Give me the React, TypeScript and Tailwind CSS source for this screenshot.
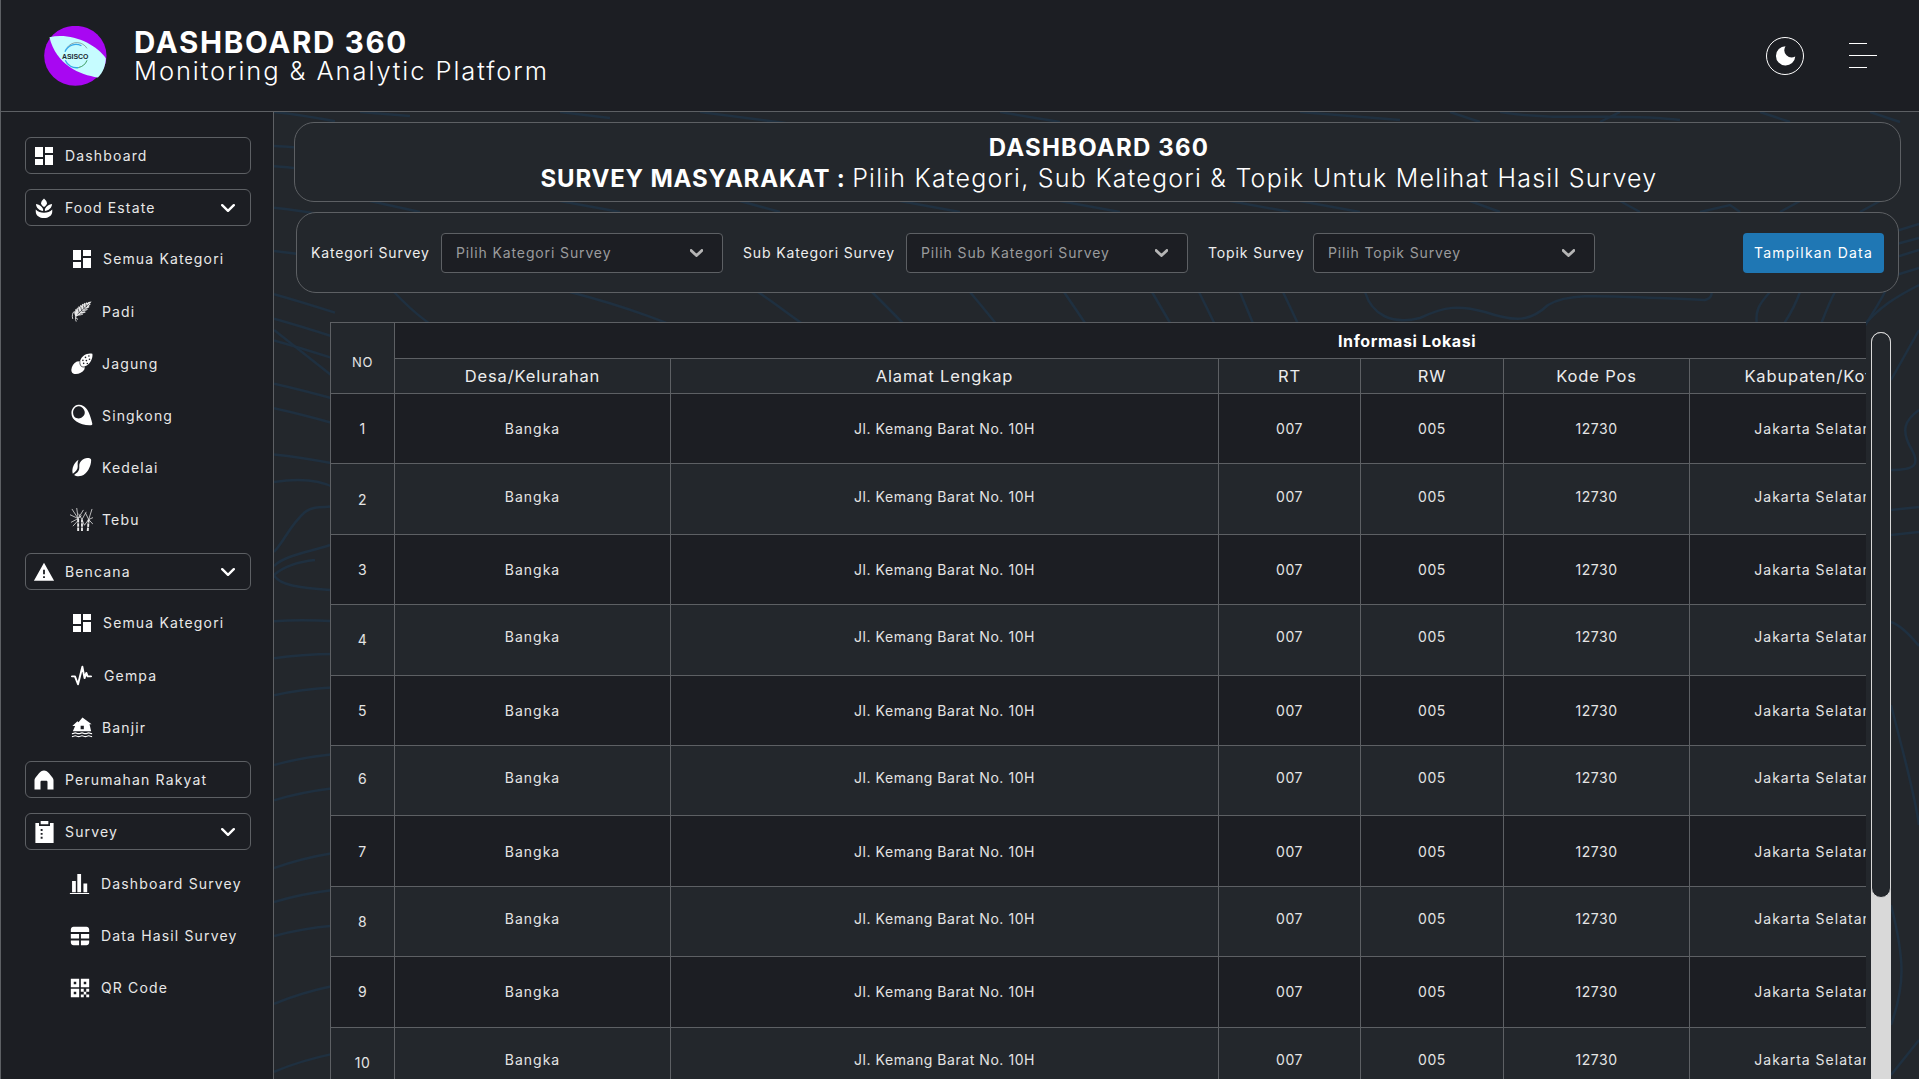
import React from "react";

type IP = { className?: string };
const Svg = ({ className, children, vb = "0 0 24 24" }: IP & { children: React.ReactNode; vb?: string }) => (
  <svg viewBox={vb} className={className} fill="currentColor">{children}</svg>
);

const DashIcon = ({ className }: IP) => (
  <Svg className={className}><path d="M3 13h8V3H3v10zm0 8h8v-6H3v6zm10 0h8V11h-8v10zm0-18v6h8V3h-8z" /></Svg>
);
const PlantIcon = ({ className }: IP) => (
  <Svg className={className}>
    <path d="M12 1.500c1.800 1.700 3.200 3.200 3.200 5.200 0 1.600-1.400 3-3.200 4.300-1.800-1.300-3.200-2.700-3.200-4.300 0-2 1.400-3.500 3.200-5.200z" />
    <path d="M3.200 7.500c3 .3 6.300 2.300 7.800 5.600v2.100C7 14.500 3.600 12 3.200 7.500zM20.800 7.500c-3 .3-6.300 2.300-7.800 5.600v2.100c4-.7 7.400-3.200 7.800-7.700z" />
    <path d="M3 13.600c2.300 2.500 5.500 3.500 9 3.600 3.500-.1 6.700-1.100 9-3.600v2.200c0 4.500-4.200 7.200-9 7.200s-9-2.700-9-7.200z" />
  </Svg>
);
const PadiIcon = ({ className }: IP) => (
  <svg viewBox="0 0 24 24" className={className}>
    <path fill="currentColor" d="M23.500 .5l-2 2.800 1.200.2-2.600 2.600 1.300.4-3.200 2.600 1.200.6-3.500 2.300 1 .8-3.700 1.800.7 1-4.200 1-.3-.4L5 18l-1-3.200-.5-3 1.300.5L5 9l1.200.8L7 7.400l1.100.9.700-2.500 1.200 1 .8-2.400 1.200 1 .9-2.300 1.300 1 1-2 1.300.9 1-1.500 1.300.7 1.200-1.100z" />
    <g stroke="#1c1e23" strokeWidth=".7" fill="none">
      <path d="M21 3L7 15.500M8 8.500l1.500 5M11 6.500l1.300 5M14 5l1 4M17 3.500l.8 3.500M10 15l6-.5M12.500 12l5.500-.8M15.500 9.500l4.500-1" />
    </g>
    <path fill="none" stroke="currentColor" strokeWidth="1" d="M7 15.500C5 17.500 4.500 20.500 6 23.500M3.500 12C1.500 14 1 17 2 20.500M5 18c.5 1.500 1.500 2.500 3 3" />
  </svg>
);
const CornIcon = ({ className }: IP) => (
  <svg viewBox="0 0 24 24" className={className}>
    <path fill="currentColor" d="M23.300.8c.6 3-.6 7-2.800 9.700-1.600 1.900-3.300 3.200-5.300 4l-.6 3.500c-2.500 3.600-6.400 5.300-10.800 4.800C1.500 22.300.2 20.700.4 18.300c.3-3.800 2.400-7.300 6-9.100l3.400-.3c.8-2.800 2.400-5 4.600-6.500 2.600-1.700 6-2.500 8.900-1.600z" />
    <g fill="#1c1e23">
      <circle cx="19.500" cy="3.300" r=".9" /><circle cx="15.800" cy="4.800" r=".9" /><circle cx="20.200" cy="6.800" r=".9" />
      <circle cx="16.800" cy="8.300" r=".9" /><circle cx="13" cy="8" r=".9" /><circle cx="13.800" cy="11.300" r=".9" /><circle cx="17.800" cy="11.500" r=".9" />
    </g>
    <path stroke="#1c1e23" strokeWidth=".8" fill="none" d="M9.800 9c-.4 2 0 4 1.400 5.500 1.200.8 2.600 1 4 .5" />
  </svg>
);
const CassavaIcon = ({ className }: IP) => (
  <svg viewBox="0 0 24 24" className={className}>
    <path fill="currentColor" d="M8 .8c3.200-.4 6 1 8.400 3.800 2.500 2.900 4.700 7.500 6.800 16.700.2 1.100-.3 1.800-1.300 1.900-5.800.4-12-1.300-16-4C2.400 16.900.6 13.800.5 10.100.4 5 3.700 1.300 8 .8z" />
    <path fill="#1c1e23" d="M8.100 2.500C4.500 2.900 2.100 6 2.300 9.800c.1 2.800 1.400 4.800 3.600 5.600 2.900 1 6.100-.1 7.900-2.500 1.500-2 1.700-4.500.3-6.700-1.500-2.500-3.600-4-6-3.700z" />
  </svg>
);
const BeanIcon = ({ className }: IP) => (
  <svg viewBox="0 0 24 24" className={className}>
    <path fill="currentColor" d="M23 3.500C23 11 18 20.500 11.500 22.500c-3.500 1-7 .5-9-1 3-2 5.200-3.600 6-6.400.8-3-.5-5.300 1-8.100C11 4 14.500 1.500 18 1.200c2-.2 5 .2 5 2.300zM1 20C0 17.500.3 13.800 1.800 10.500 3 7.800 5 5 7.800 3.300 6.500 6 6.700 8.500 6.900 10.700c.3 3.400-2.200 6.900-5.900 9.300z" />
  </svg>
);
const TebuIcon = ({ className }: IP) => (
  <svg viewBox="0 0 24 24" className={className} fill="none" stroke="currentColor">
    <path strokeWidth="2" strokeDasharray="3.600 .8" d="M8.500 24L8.500 11M12.500 24L12.500 12M18.500 24L19.500 12" />
    <path strokeWidth=".8" d="M8.500 11L2 1M8.500 11L7 0M8.500 11L0 7M8.500 11L14 2M8.500 11L1 15M8.500 11L12 8M8.500 13L3 19M12.500 12L9 6M12.500 12L17 4M19.500 12L23 1M19.500 12L16 5M19.500 12L24 10M19.500 12L15 18M19.500 12L24 17M12.500 12L15 18" />
  </svg>
);
const WarnIcon = ({ className }: IP) => (
  <Svg className={className}><path d="M1 21.500h22L12 2 1 21.500zm12-3h-2v-2h2v2zm0-4h-2v-5h2v5z" /></Svg>
);
const PulseIcon = ({ className }: IP) => (
  <svg viewBox="0 0 24 24" className={className} fill="none" stroke="currentColor" strokeWidth="2.200" strokeLinejoin="round" strokeLinecap="round">
    <path d="M1 13h3.500l3.500 9L13 2l2.500 13 2-6 1.500 4H23" />
  </svg>
);
const FloodIcon = ({ className }: IP) => (
  <Svg className={className}>
    <path d="M12.500 1.500l10 7.500h-2.300l1.800 7.500H2l2.500-5.500H1.500L7 5.800l1.200 1 4.300-5.300zM10.500 10.500v4h3.500v-4z" fill="currentColor" fillRule="evenodd" />
    <path d="M1 18.600c1.800 0 2-.9 3.700-.9s1.900.9 3.700.9 1.900-.9 3.600-.9 1.900.9 3.700.9 1.900-.9 3.600-.9 1.900.9 3.700.9v1.300c-1.800 0-2-.9-3.700-.9s-1.900.9-3.600.9-2-.9-3.700-.9-1.900.9-3.600.9-2-.9-3.700-.9-1.900.9-3.700.9zM1 21.800c1.800 0 2-.9 3.700-.9s1.900.9 3.700.9 1.900-.9 3.600-.9 1.900.9 3.700.9 1.900-.9 3.600-.9 1.900.9 3.700.9v1.300c-1.800 0-2-.9-3.700-.9s-1.900.9-3.600.9-2-.9-3.700-.9-1.900.9-3.600.9-2-.9-3.700-.9-1.900.9-3.700.9z" />
  </Svg>
);
const HomeIcon = ({ className }: IP) => (
  <Svg className={className}>
    <path fillRule="evenodd" d="M12 2.500c2 0 3.700 1.200 5 2.700l3.600 4.500c.6.800.9 1.600.9 2.500v9.300h-6v-7.500c0-.8-.6-1.300-1.300-1.300h-4.400c-.7 0-1.300.5-1.300 1.300v7.500h-6v-9.300c0-.9.300-1.700.9-2.500L7 5.200c1.300-1.500 3-2.700 5-2.700z" />
  </Svg>
);
const ClipIcon = ({ className }: IP) => (
  <Svg className={className}>
    <path fillRule="evenodd" d="M8 1h8v3.500H8zM2.500 3h3.800v3.200h11.400V3h3.800v21h-19zM8 9.500h2v2H8zm0 4h2v2H8zm0 4h2v2H8z" />
  </Svg>
);
const BarsIcon = ({ className }: IP) => (
  <Svg className={className}>
    <path d="M1 22.800h22V24H1zM3.500 9h4.300v13H3.500zM9.500 1h4.300v21H9.500zM16.500 12h4.300v10h-4.300z" />
  </Svg>
);
const TableIcon = ({ className }: IP) => (
  <Svg className={className}>
    <path d="M2 5c0-1.700 1.300-3 3-3h14c1.700 0 3 1.300 3 3v2.500H2zM2 9.700h9v5H2zM13 9.700h9v5h-9zM2 17h9v5H5c-1.700 0-3-1.300-3-3zM13 17h9v2c0 1.700-1.300 3-3 3h-6z" />
  </Svg>
);
const QrIcon = ({ className }: IP) => (
  <Svg className={className}>
    <path fillRule="evenodd" d="M1 1h10v10H1zm3.500 3.500v3h3v-3zM13 1h10v10H13zm3.500 3.500v3h3v-3zM1 13h10v10H1zm3.500 3.500v3h3v-3zM13 13h3.500v3.500H13zM19.500 13H23v3.500h-3.500zM16.500 16.500h3v3.200h-3zM13 19.700h3.500V23H13zM19.500 19.700H23V23h-3.500z" />
  </Svg>
);
const Chevron = ({ className, w = 2.4 }: IP & { w?: number }) => (
  <svg viewBox="0 0 14 8" className={className} fill="none" stroke="currentColor" strokeWidth={w} strokeLinecap="round" strokeLinejoin="round">
    <path d="M1.200 1.200L7 6.800l5.800-5.600" />
  </svg>
);

const Logo = () => (
  <svg viewBox="42 32 190 182" className="w-[63px] h-[60px] mt-[1px]">
    <ellipse cx="136.500" cy="122.500" rx="94.500" ry="91" fill="#a807f2" />
    <path d="M58 66C120 50 200 85 229 130 229 150 220 175 205 188 150 180 78 150 58 66Z" fill="#c6fcff" />
    <path d="M172 100a36 36 0 0 0-60-3" fill="none" stroke="#555" strokeWidth="1.500" />
    <path d="M155 92a36 36 0 0 0-50 18" fill="none" stroke="#38a8e8" strokeWidth="4" />
    <path d="M106 136a36 36 0 0 0 40 22" fill="none" stroke="#38a8e8" strokeWidth="4" />
    <path d="M146 158a36 36 0 0 0 26-22" fill="none" stroke="#3c9a5f" strokeWidth="3" />
    <text x="136" y="131" textAnchor="middle" fontSize="21" fontWeight="700" fill="#1d2a33" className="font-['Liberation_Sans',sans-serif]">ASISCO</text>
  </svg>
);

const leftLines: [number, number][] = [[0, 15], [55, 65], [88, 100], [155, 170], [225, 240], [295, 325], [335, 365], [370, 400], [440, 465], [480, 505], [555, 570], [825, 825], [885, 878], [945, 932], [1058, 1040], [1115, 1095], [1225, 1200], [1280, 1260], [1335, 1318], [1445, 1415], [1555, 1525]];

const Topo = () => (
  <svg viewBox="274 112 1645 967" className="absolute inset-0 w-[1645px] h-[967px]" fill="none" stroke="#1f3040" strokeWidth="2.500">
    {leftLines.map(([a, b], i) => (
      <path key={i} d={`M274 ${112 + a / 1.62}Q300 ${112 + (a + b) / 3.24 - 2} 335 ${112 + b / 1.62}`} />
    ))}
    <path d="M274 482C300 478 320 480 335 488M274 552C285 540 290 525 305 512 315 505 325 508 335 506M274 566C285 555 310 552 330 545M274 575C282 568 295 562 315 560M274 575C278 585 300 588 330 590" />
    <path d="M360 112L410 116M560 112L610 118M700 112L800 125M1000 112L1060 122M1300 112L1400 120M1620 112L1600 122M1760 112L1790 122M1870 112L1900 122M1500 112C1560 122 1620 112 1680 120M1450 112L1480 122" />
    <path d="M370 201L420 212M560 201L620 212M740 201L780 212M900 201L960 212M1060 201L1120 212M1230 201L1290 212M1300 201L1360 212M1470 201L1500 212M1620 201L1640 212M1800 201L1780 212M1700 212L1730 205 1740 212M1880 201L1860 212" />
    <path d="M274 330L350 390" />
    <path d="M394 292C430 330 470 360 519 322" />
    <path d="M570 292C620 305 680 325 711 345" />
    <path d="M758 292C785 310 815 335 835 345M872 292C890 310 910 330 924 345M970 292C985 310 1002 330 1012 345M1064 292L1100 345M1152 292L1183 345M1199 292L1225 345M1240 292L1262 345M1283 292L1308 345" />
    <path d="M1365 292C1372 315 1392 325 1420 318 1445 306 1460 305 1485 312 1515 322 1530 322 1548 305 1570 292 1600 296 1705 300 1712 298 1712 295 1712 285" />
    <path d="M1770 292C1758 305 1755 312 1757 325M1800 292C1790 320 1780 325 1776 340M1835 292C1825 310 1820 330 1812 345M1885 292C1870 320 1860 330 1855 345" />
    <path d="M1893 232L1919 224M1893 245L1919 238M1893 258L1919 250M1893 276L1919 268M1860 330C1880 305 1900 295 1919 285M1891 380L1919 330M1919 410C1905 420 1900 430 1912 450 1920 465 1915 470 1891 470M1891 510L1919 507M1891 535L1919 532M1891 622C1900 625 1910 635 1919 646M1891 705C1905 760 1915 795 1919 825M1891 905C1905 960 1905 985 1891 1025M1891 1075L1919 1040" />
  </svg>
);

const Item = ({ icon, label, chevron }: { icon: React.ReactNode; label: string; chevron?: boolean }) => (
  <div className="h-[37px] ml-[24px] w-[226px] border border-[#5d6064] rounded-[6px] flex items-center pl-[6px] pr-[15px]">
    <span className="w-[24px] h-[24px] shrink-0 flex items-center justify-center">{icon}</span>
    <span className="ml-[9px] text-[14px] tracking-[1.15px] text-[#e8e8e8] flex-1 whitespace-nowrap">{label}</span>
    {chevron && <Chevron className="w-[14px] h-[8px] text-white" />}
  </div>
);

const Sub = ({ icon, label, cls }: { icon: React.ReactNode; label: string; cls: string }) => (
  <div className={`h-[37px] flex items-center text-[14px] tracking-[1.15px] text-[#e8e8e8] whitespace-nowrap ${cls}`}>
    {icon}
    <span>{label}</span>
  </div>
);

const Sidebar = () => (
  <aside className="w-[273px] shrink-0 border-r border-[#5d6064] bg-[#1c1e23] pt-[25px] flex flex-col gap-[15px]">
    <Item icon={<DashIcon className="w-[24px] h-[24px] shrink-0 text-white" />} label="Dashboard" />
    <Item icon={<PlantIcon className="w-[22px] h-[22px] shrink-0 text-white" />} label="Food Estate" chevron />
    <Sub cls="pl-[69px] gap-[9px] pb-[2px]" icon={<DashIcon className="w-[24px] h-[24px] shrink-0 text-white" />} label="Semua Kategori" />
    <Sub cls="pl-[70px] gap-[10px] pb-[1px]" icon={<PadiIcon className="w-[21px] h-[23px] shrink-0 text-[#e8e8e8]" />} label="Padi" />
    <Sub cls="pl-[70px] gap-[9px]" icon={<CornIcon className="w-[22px] h-[22px] shrink-0 text-white" />} label="Jagung" />
    <Sub cls="pl-[70px] gap-[9px] pb-[1px]" icon={<CassavaIcon className="w-[22px] h-[22px] shrink-0 text-white" />} label="Singkong" />
    <Sub cls="pl-[71px] gap-[10px] pb-[1px]" icon={<BeanIcon className="w-[20px] h-[20px] shrink-0 text-white" />} label="Kedelai" />
    <Sub cls="pl-[69px] gap-[9px] pb-[1px]" icon={<TebuIcon className="w-[23px] h-[23px] shrink-0 text-[#e8e8e8]" />} label="Tebu" />
    <Item icon={<WarnIcon className="w-[22px] h-[22px] shrink-0 text-white" />} label="Bencana" chevron />
    <Sub cls="pl-[69px] gap-[9px] pb-[2px]" icon={<DashIcon className="w-[24px] h-[24px] shrink-0 text-white" />} label="Semua Kategori" />
    <Sub cls="pl-[70px] gap-[12px]" icon={<PulseIcon className="w-[21px] h-[21px] shrink-0 text-white" />} label="Gempa" />
    <Sub cls="pl-[70px] gap-[9px] pb-[1px]" icon={<FloodIcon className="w-[22px] h-[22px] shrink-0 text-white" />} label="Banjir" />
    <Item icon={<HomeIcon className="w-[24px] h-[24px] shrink-0 text-white" />} label="Perumahan Rakyat" />
    <Item icon={<ClipIcon className="w-[23px] h-[23px] shrink-0 text-white" />} label="Survey" chevron />
    <Sub cls="pl-[67px] gap-[10px]" icon={<BarsIcon className="w-[23px] h-[21px] shrink-0 text-white" />} label="Dashboard Survey" />
    <Sub cls="pl-[68px] gap-[10px]" icon={<TableIcon className="w-[22px] h-[22px] shrink-0 text-white" />} label="Data Hasil Survey" />
    <Sub cls="pl-[69px] gap-[11px]" icon={<QrIcon className="w-[20px] h-[20px] shrink-0 text-white" />} label="QR Code" />
  </aside>
);

const SelectBox = ({ placeholder }: { placeholder: string }) => (
  <div className="w-[282px] h-[40px] rounded-[4px] border border-[#5d6064] bg-[#1c1e23] flex items-center justify-between pl-[14px] pr-[19px]">
    <span className="text-[14px] tracking-[0.87px] text-[#9a9b9d] whitespace-nowrap">{placeholder}</span>
    <Chevron className="w-[13px] h-[8px] text-[#b5b5b5]" w={3} />
  </div>
);

const Label = ({ children, cls }: { children: React.ReactNode; cls: string }) => (
  <span className={`text-[14px] tracking-[0.87px] text-[#eeeeee] whitespace-nowrap ${cls}`}>{children}</span>
);

const cell = "border border-[#5d6064] text-center p-0 font-normal";
const rows = [1, 2, 3, 4, 5, 6, 7, 8, 9, 10];
const values: [string, string][] = [
  ["Bangka", "tracking-[1px]"],
  ["Jl. Kemang Barat No. 10H", ""],
  ["007", ""],
  ["005", ""],
  ["12730", ""],
  ["Jakarta Selatan", "tracking-[1px] whitespace-nowrap"],
];

const DataTable = () => (
  <div className="w-[1536px] h-[757px] overflow-hidden relative">
    <table className="table-fixed border-collapse w-[1606px] border-t border-l border-[#5d6064] text-[14px] tracking-[0.55px] text-[#e4e4e4]">
      <colgroup>
        <col className="w-[64px]" />
        <col className="w-[276px]" />
        <col className="w-[548px]" />
        <col className="w-[142px]" />
        <col className="w-[143px]" />
        <col className="w-[186px]" />
        <col className="w-[247px]" />
      </colgroup>
      <thead>
        <tr className="h-[36px]">
          <th rowSpan={2} className={`${cell} bg-[#23272c] text-[13px] font-medium pt-[10px]`}>NO</th>
          <th colSpan={6} className={`${cell} bg-[#1c1e23]`}>
            <span className="block pl-[943px] text-left font-bold text-[16px] tracking-[0.6px] text-white">Informasi Lokasi</span>
          </th>
        </tr>
        <tr className="h-[35px] text-[16.500px] tracking-[0.85px] bg-[#23272c] text-[#ececec]">
          {["Desa/Kelurahan", "Alamat Lengkap", "RT", "RW", "Kode Pos", "Kabupaten/Kota"].map((h) => (
            <th key={h} className={`${cell} whitespace-nowrap`}>{h}</th>
          ))}
        </tr>
      </thead>
      <tbody>
        {rows.map((n) => {
          const even = n % 2 === 0;
          return (
            <tr key={n} className={even ? "h-[70.400px] bg-[#23272c]" : "h-[70.400px] bg-[#1c1e23]"}>
              <td className={n === 6 ? `${cell} pb-[5px]` : cell}>{n}</td>
              {values.map(([v, c]) => (
                <td key={v} className={even ? `${cell} pb-[6px] ${c}` : `${cell} ${c}`}>{v}</td>
              ))}
            </tr>
          );
        })}
      </tbody>
    </table>
  </div>
);

export default function App() {
  return (
    <div className="w-full h-screen overflow-hidden flex flex-col bg-[#1c1e23] border-l border-[#5d6064] font-[Inter,sans-serif] text-white">
      <header className="h-[112px] shrink-0 border-b border-[#5d6064] flex items-center pl-[43px] pr-[42px]">
        <Logo />
        <div className="ml-[27px] flex flex-col">
          <span className="text-[29.500px] leading-[30px] font-bold tracking-[1.700px] mt-[1px]">DASHBOARD 360</span>
          <span className="text-[25.500px] leading-[28px] font-light tracking-[1.920px]">Monitoring &amp; Analytic Platform</span>
        </div>
        <div className="ml-auto flex items-center gap-[45px]">
          <div className="w-[38px] h-[38px] rounded-full border-[1.5px] border-white flex items-center justify-center">
            <svg viewBox="0 0 20 20" className="w-[21px] h-[21px] text-white" fill="currentColor">
              <path d="M10 1.200A9.200 9.200 0 1 0 19.300 11 7 7 0 0 1 10 1.200Z" />
            </svg>
          </div>
          <div className="w-[28px] flex flex-col gap-[10.500px]">
            <div className="w-[18px] h-[1.500px] bg-white" />
            <div className="w-[28px] h-[1.500px] bg-white" />
            <div className="w-[18px] h-[1.500px] bg-white" />
          </div>
        </div>
      </header>
      <div className="flex-1 flex min-h-0">
        <Sidebar />
        <main className="flex-1 relative overflow-hidden bg-[#23272c]">
          <Topo />
          <div className="relative pt-[10px] flex flex-col">
            <section className="ml-[20px] w-[1607px] h-[80px] rounded-[20px] border border-[#5d6064] bg-[#23272c] flex flex-col items-center justify-center pl-[3px] text-white">
              <div className="text-[24px] leading-[31px] font-bold tracking-[1.200px] mt-[1px]">DASHBOARD 360</div>
              <div className="text-[25px] leading-[30px] tracking-[1.250px] font-light whitespace-nowrap">
                <span className="font-bold text-[24px] tracking-[0.8px]">SURVEY MASYARAKAT : </span>Pilih Kategori, Sub Kategori &amp; Topik Untuk Melihat Hasil Survey
              </div>
            </section>
            <section className="ml-[22px] mt-[10px] w-[1603px] h-[81px] rounded-[20px] border border-[#5d6064] bg-[#23272c] flex items-center pl-[14px] pr-[14px]">
              <Label cls="w-[120px]">Kategori Survey</Label>
              <div className="ml-[10px]"><SelectBox placeholder="Pilih Kategori Survey" /></div>
              <Label cls="ml-[20px] w-[153px]">Sub Kategori Survey</Label>
              <div className="ml-[10px]"><SelectBox placeholder="Pilih Sub Kategori Survey" /></div>
              <Label cls="ml-[20px] w-[95px]">Topik Survey</Label>
              <div className="ml-[10px]"><SelectBox placeholder="Pilih Topik Survey" /></div>
              <button className="ml-auto w-[141px] h-[40px] rounded-[4px] bg-[#1f77b4] text-[14px] tracking-[1.25px] text-white whitespace-nowrap">Tampilkan Data</button>
            </section>
            <div className="ml-[56px] mt-[29px] flex items-start gap-[5px]">
              <DataTable />
              <div className="w-[20px] h-[747px] mt-[10px] bg-[#d9d9d9] rounded-t-[10px]">
                <div className="h-[566px] rounded-[10px] border-[1.5px] border-[#d9d9d9] bg-[#23272c]" />
              </div>
            </div>
          </div>
        </main>
      </div>
    </div>
  );
}
